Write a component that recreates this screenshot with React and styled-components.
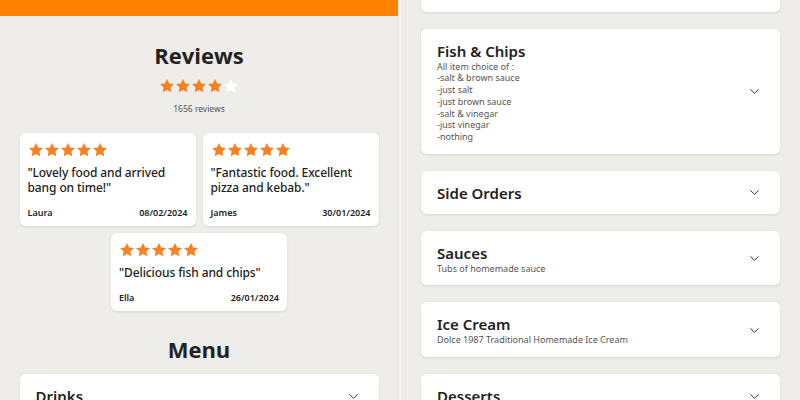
import React from "react";
import styled, { createGlobalStyle } from "styled-components";
import { ChevronDown } from "lucide-react";

const Global = createGlobalStyle`
  html, body { margin: 0; padding: 0; background: #eeede9; }
  body { font-family: "Noto Sans", "Open Sans", sans-serif; color: #222; }
  * { box-sizing: border-box; }
`;

const Page = styled.div`
  display: flex;
  width: 800px;
  height: 400px;
  overflow: hidden;
  background: #eeede9;
`;

const LeftPanel = styled.div`
  width: 398px;
  flex: none;
  display: flex;
  flex-direction: column;
  align-items: center;
  overflow: hidden;
`;

const Divider = styled.div`
  width: 3px;
  flex: none;
  background: #f7f7f5;
  border-left: 1px solid #e4e3df;
`;

const RightPanel = styled.div`
  flex: 1;
  padding: 0 20px 0 20px;
  overflow: hidden;
`;

const OrangeBar = styled.div`
  align-self: stretch;
  height: 16px;
  background: #ff8200;
  flex: none;
`;

const SectionTitle = styled.h2`
  margin: ${(p) => p.$mt}px 0 0;
  font-family: "Open Sans", sans-serif;
  font-weight: 700;
  font-size: 22px;
  line-height: 30px;
  color: #222;
`;

const StarRow = styled.div`
  display: flex;
  gap: ${(p) => p.$gap ?? 0}px;
  margin-top: ${(p) => p.$mt ?? 0}px;
`;

const Count = styled.div`
  margin-top: 9px;
  font-size: 8.5px;
  line-height: 12px;
  color: #555;
`;

const ReviewGrid = styled.div`
  margin-top: 18px;
  width: 359px;
  display: flex;
  flex-wrap: wrap;
  justify-content: center;
  gap: 7px;
`;

const ReviewCard = styled.div`
  width: 176px;
  background: #fff;
  border-radius: 6px;
  box-shadow: 0 1px 3px rgba(0, 0, 0, 0.1);
  padding: 9px 8px 8px;
  display: flex;
  flex-direction: column;
`;

const Quote = styled.div`
  margin-top: 7px;
  font-size: 12px;
  font-weight: 500;
  letter-spacing: -0.1px;
  line-height: 15px;
  color: #222;
  flex: 1;
`;

const ReviewFoot = styled.div`
  margin-top: 12px;
  display: flex;
  justify-content: space-between;
  font-size: 9px;
  font-weight: 600;
  line-height: 11px;
  color: #222;
`;

const MenuList = styled.div`
  display: flex;
  flex-direction: column;
  gap: 17px;
  width: 359px;
  margin-top: ${(p) => p.$mt}px;
`;

const MenuCard = styled.div`
  background: #fff;
  border-radius: 6px;
  box-shadow: 0 1px 3px rgba(0, 0, 0, 0.1);
  padding: 12px 18px 11px 16px;
  display: flex;
  align-items: center;
  gap: 12px;
  flex: none;
`;

const MenuText = styled.div`
  flex: 1;
  min-width: 0;
`;

const MenuTitle = styled.div`
  font-size: 15px;
  font-weight: 600;
  line-height: 20px;
  color: #222;
`;

const MenuDesc = styled.div`
  font-size: 9px;
  line-height: 11.7px;
  color: #555;
  white-space: pre-line;
`;

const Chevron = styled(ChevronDown)`
  flex: none;
  color: #333;
`;

const StarSvg = ({ size = 16, filled = true }) => (
  <svg width={size} height={size} viewBox="0 0 24 24">
    <path
      d="M12 1.5l3.2 6.7 7.3.9-5.4 5.1 1.4 7.2L12 17.9l-6.5 3.5 1.4-7.2-5.4-5.1 7.3-.9z"
      fill={filled ? "#f5821f" : "#ffffff"}
    />
  </svg>
);

const Stars = ({ n = 5, filled = 5, size = 16, mt }) => (
  <StarRow $mt={mt}>
    {Array.from({ length: n }).map((_, i) => (
      <StarSvg key={i} size={size} filled={i < filled} />
    ))}
  </StarRow>
);

const reviews = [
  { text: '"Lovely food and arrived bang on time!"', name: "Laura", date: "08/02/2024" },
  { text: '"Fantastic food. Excellent pizza and kebab."', name: "James", date: "30/01/2024" },
  { text: '"Delicious fish and chips"', name: "Ella", date: "26/01/2024" },
];

const menu = [
  { title: "Pizzas", desc: "Fresh pizza dough, made daily" },
  {
    title: "Fish & Chips",
    desc:
      "All item choice of :\n-salt & brown sauce\n-just salt\n-just brown sauce\n-salt & vinegar\n-just vinegar\n-nothing",
  },
  { title: "Side Orders" },
  { title: "Sauces", desc: "Tubs of homemade sauce" },
  { title: "Ice Cream", desc: "Dolce 1987 Traditional Homemade Ice Cream" },
  { title: "Desserts" },
];

const MenuItem = ({ title, desc }) => (
  <MenuCard>
    <MenuText>
      <MenuTitle>{title}</MenuTitle>
      {desc && <MenuDesc>{desc}</MenuDesc>}
    </MenuText>
    <Chevron size={15} strokeWidth={1.6} />
  </MenuCard>
);

export default function App() {
  return (
    <>
      <Global />
      <Page>
        <LeftPanel>
          <OrangeBar />
          <SectionTitle $mt={24}>Reviews</SectionTitle>
          <Stars filled={4} size={16} mt={8} />
          <Count>1656 reviews</Count>
          <ReviewGrid>
            {reviews.map((r) => (
              <ReviewCard key={r.name}>
                <Stars size={16} />
                <Quote>{r.text}</Quote>
                <ReviewFoot>
                  <span>{r.name}</span>
                  <span>{r.date}</span>
                </ReviewFoot>
              </ReviewCard>
            ))}
          </ReviewGrid>
          <SectionTitle $mt={23}>Menu</SectionTitle>
          <MenuList $mt={10}>
            <MenuItem title="Drinks" />
          </MenuList>
        </LeftPanel>
        <Divider />
        <RightPanel>
          <MenuList $mt={-43}>
            {menu.map((m) => (
              <MenuItem key={m.title} {...m} />
            ))}
          </MenuList>
        </RightPanel>
      </Page>
    </>
  );
}
